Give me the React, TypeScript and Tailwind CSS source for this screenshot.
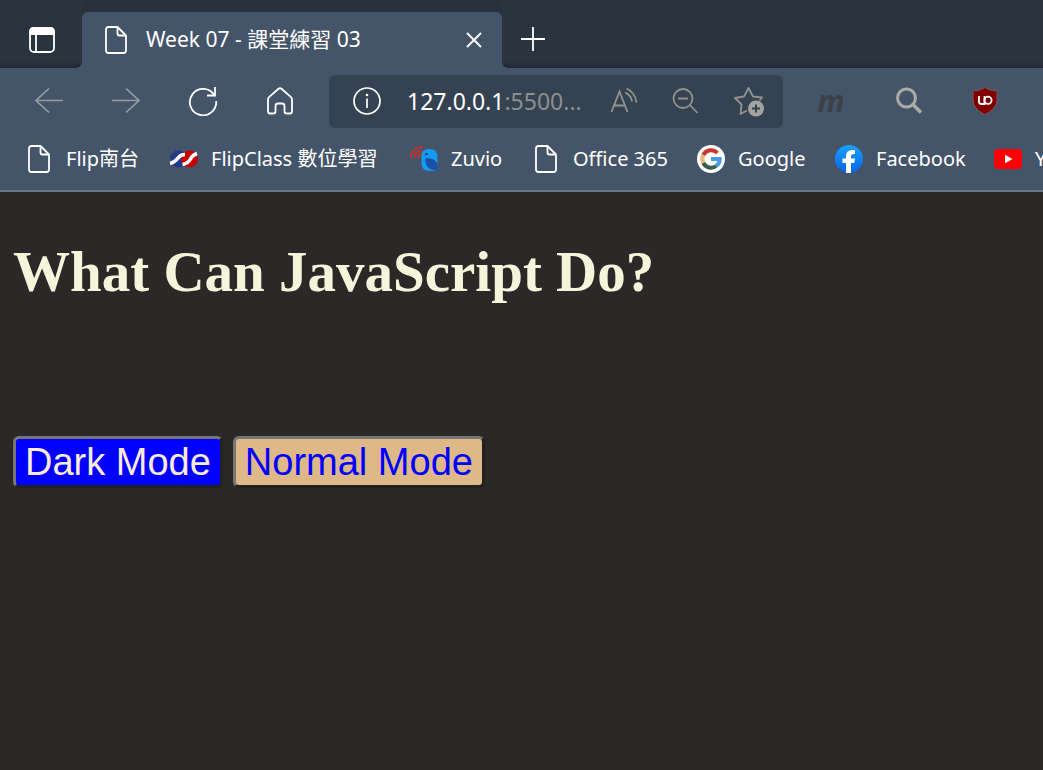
import type { ReactNode } from "react";

function PageIcon() {
  return (
    <svg className="h-7 w-[22px] shrink-0" viewBox="0 0 22 28" fill="none" stroke="#fff" strokeWidth="1.8" strokeLinejoin="round">
      <path d="M3.5 1H12.5L21 9.5V24.5Q21 27 18.5 27H3.5Q1 27 1 24.5V3.5Q1 1 3.5 1Z" />
      <path d="M12.5 1V7.5Q12.5 9.5 14.5 9.5H21" />
    </svg>
  );
}

function FlipClassIcon() {
  return (
    <svg className="h-[18px] w-7 shrink-0" viewBox="0 0 28 18">
      <circle cx="8.5" cy="9" r="8.5" fill="#263a8c" />
      <circle cx="19.5" cy="9" r="8.5" fill="#c40000" />
      <path d="M0 13.5Q5 12 8 8Q10.500 4.500 15 4.500" fill="none" stroke="#fff" strokeWidth="3.600" />
      <path d="M12.500 14.500Q18 13.500 20.500 9Q22.500 5 27 3.500" fill="none" stroke="#fff" strokeWidth="3.600" />
    </svg>
  );
}

function ZuvioIcon() {
  return (
    <svg className="h-[26px] w-7 shrink-0" viewBox="0 0 28 26">
      <g fill="none" stroke="#dc2a1c" strokeWidth="1.500">
        <path d="M1 12Q1 1.500 13 1" />
        <path d="M4.500 12Q4.500 5 12.500 4.500" />
        <path d="M8 12Q8 8 12 7.500" />
      </g>
      <path d="M11.500 10Q11.500 3 19.500 3Q27.500 3 27.500 11V25H20Q11.500 25 11.500 17Z" fill="#149cf4" />
      <path d="M15.500 12Q27.500 12 27.500 21V25Q14.500 24 15.500 12Z" fill="#1f4ea6" />
      <circle cx="16.500" cy="8" r="1.300" fill="#183d80" />
    </svg>
  );
}

function FacebookIcon() {
  return (
    <svg className="size-7 shrink-0" viewBox="0 0 28 28">
      <defs>
        <linearGradient id="fb" x1="0" y1="0" x2="0" y2="1">
          <stop offset="0" stopColor="#18a0fb" />
          <stop offset="1" stopColor="#0765e6" />
        </linearGradient>
      </defs>
      <circle cx="14" cy="14" r="14" fill="url(#fb)" />
      <path d="M11 28V18H7.500V13.500H11V11.500Q11 5 17 5Q19 5 20 5.300V9H18.200Q16 9 16 11.500V13.500H20L19.200 18H16V28Z" fill="#fff" />
    </svg>
  );
}

function YoutubeIcon() {
  return (
    <svg className="h-5 w-7 shrink-0" viewBox="0 0 28 20">
      <rect width="28" height="20" rx="4" fill="#f00" />
      <path d="M11 5.800V14.200L18.500 10Z" fill="#fff" />
    </svg>
  );
}

function GoogleIcon() {
  return (
    <svg className="size-7 shrink-0" viewBox="0 0 28 28" fill="none" strokeWidth="4">
      <circle cx="14" cy="14" r="14" fill="#fff" />
      <path d="M20.400 8A8.700 8.700 0 0 0 6.300 10" stroke="#c5392e" />
      <path d="M6.300 10A8.700 8.700 0 0 0 6.500 18.300" stroke="#e6b877" />
      <path d="M6.300 18A8.700 8.700 0 0 0 19.200 21" stroke="#33604c" />
      <path d="M14 14H22.700A8.700 8.700 0 0 1 19.200 21" stroke="#459be6" />
    </svg>
  );
}

function Bookmark({ icon, label, className }: { icon: ReactNode; label: string; className: string }) {
  return (
    <a href="#" className={`flex h-10 shrink-0 items-center whitespace-nowrap ${className}`}>
      {icon}
      {label}
    </a>
  );
}

const iconButton = "flex size-8 shrink-0 items-center justify-center";

export default function App() {
  return (
    <div className="flex min-h-screen flex-col overflow-hidden bg-[#2c2827] font-['Noto_Sans','Noto_Sans_CJK_TC',sans-serif] text-white">
      <header className="bg-[#455569]">
        <div className="flex h-[68px] bg-[#455569]">
          <div className="flex w-[82px] shrink-0 items-center rounded-br-md bg-linear-to-b from-[#2a343f] from-90% to-[#202933] pt-3 pl-[26px]">
            <button aria-label="Tab actions" className={iconButton}>
              <svg className="size-[26px]" viewBox="0 0 26 26" fill="none" stroke="#fff" strokeWidth="1.800">
                <rect x="1" y="1" width="24" height="24" rx="4" />
                <path d="M1 7V5Q1 1 5 1H21Q25 1 25 5V7Z" fill="#fff" />
                <path d="M7 7V25" />
              </svg>
            </button>
          </div>
          <div className="w-[420px] shrink-0 bg-[#28323d] pt-3">
            <div className="flex h-14 items-center rounded-t-md bg-[#455569] pl-[23px]">
              <PageIcon />
              <span className="ml-[19px] flex-1 text-[21px] whitespace-nowrap">Week 07 - 課堂練習 03</span>
              <button aria-label="Close tab" className="mr-3 flex size-8 items-center justify-center">
                <svg className="size-4" viewBox="0 0 16 16" stroke="#fff" strokeWidth="1.900">
                  <path d="M1 1L15 15M15 1L1 15" />
                </svg>
              </button>
            </div>
          </div>
          <div className="flex flex-1 items-center rounded-bl-md bg-linear-to-b from-[#2a343f] from-90% to-[#202933] pt-[10px] pl-[15px]">
            <button aria-label="New tab" className={iconButton}>
              <svg className="size-6" viewBox="0 0 24 24" stroke="#fff" strokeWidth="1.800">
                <path d="M12 0V24M0 12H24" />
              </svg>
            </button>
          </div>
        </div>

        <nav aria-label="Navigation" className="flex h-[66px] items-center pl-[33px]">
          <button aria-label="Back" className={iconButton}>
            <svg className="size-7" viewBox="0 0 28 28" fill="none" stroke="#979b9f" strokeWidth="1.700">
              <path d="M28 13.500H1M14 1.500L1 13.500L14 25.500" />
            </svg>
          </button>
          <button aria-label="Forward" className={`${iconButton} ml-[45px]`}>
            <svg className="size-7" viewBox="0 0 28 28" fill="none" stroke="#979b9f" strokeWidth="1.700">
              <path d="M0 13.500H27M14 1.500L27 13.500L14 25.500" />
            </svg>
          </button>
          <button aria-label="Refresh" className={`${iconButton} ml-[45px]`}>
            <svg className="size-[30px]" viewBox="-1 -1 30 30" fill="none" stroke="#fff" strokeWidth="1.800">
              <path d="M25.500 8.500A13.200 13.200 0 1 0 27.200 14M26 0V8.500H18" />
            </svg>
          </button>
          <button aria-label="Home" className={`${iconButton} ml-[45px]`}>
            <svg className="h-7 w-[26px]" viewBox="0 0 26 28" fill="none" stroke="#fff" strokeWidth="1.800" strokeLinejoin="round">
              <path d="M1 12.500Q1 11 2.300 9.900L11.500 1.800Q13 0.600 14.500 1.800L23.700 9.900Q25 11 25 12.500V24Q25 26.500 23 26.500H20Q17.500 26.500 17.500 24.500V19Q17.500 16.500 15 16.500H11Q8.500 16.500 8.500 19V24.500Q8.500 26.500 6 26.500H3Q1 26.500 1 24Z" />
            </svg>
          </button>
          <div className="ml-[33px] flex h-[53px] w-[454px] shrink-0 items-center rounded-md bg-[#354252] pr-[18px] pl-[22px]">
            <button aria-label="Site information" className={iconButton}>
              <svg className="size-7" viewBox="0 0 28 28" fill="none" stroke="#fff" strokeWidth="1.700">
                <circle cx="14" cy="14" r="13" />
                <path d="M14 11.500V21" />
                <circle cx="14" cy="8" r="1.300" fill="#fff" stroke="none" />
              </svg>
            </button>
            <span className="ml-6 flex-1 text-[23px] whitespace-nowrap">
              127.0.0.1<span className="text-[#8d8f8e]">:5500...</span>
            </span>
            <button aria-label="Read aloud" className={iconButton}>
              <svg className="size-7" viewBox="0 0 28 28" fill="none" stroke="#92928e" strokeWidth="1.800">
                <path d="M1.500 25L9.500 4.500L17.500 25M4.500 18.500H14.500M16.500 1.500Q25 5 26.500 15.500M15 5.500Q21 8 22 14.500" />
              </svg>
            </button>
            <button aria-label="Zoom out" className={`${iconButton} ml-[29px]`}>
              <svg className="size-7" viewBox="0 0 28 28" fill="none" stroke="#92928e" strokeWidth="1.800">
                <circle cx="12" cy="11.500" r="9.500" />
                <path d="M7 11.500H17M19 18L26.500 26" />
              </svg>
            </button>
            <button aria-label="Add to favorites" className={`${iconButton} ml-8`}>
              <svg className="size-8" viewBox="0 0 32 32" fill="none" stroke="#92928e" strokeWidth="1.800" strokeLinejoin="round">
                <path d="M14 25.500L7.500 29L8.500 19.500L2 13L11 11.500L15.500 3L20 11.500L29 12.500L26.500 15.500" />
                <circle cx="23" cy="23.500" r="8" fill="#a3a4a0" stroke="none" />
                <path d="M23 19.500V27.500M19 23.500H27" stroke="#354252" strokeWidth="2" />
              </svg>
            </button>
          </div>
          <button aria-label="m extension" className={`${iconButton} ml-8 text-[30px] leading-none font-bold text-[#3c4047] italic`}>
            m
          </button>
          <button aria-label="Search" className={`${iconButton} ml-[46px]`}>
            <svg className="size-7" viewBox="0 0 28 28" fill="none" stroke="#aaaaa6">
              <circle cx="11.500" cy="11" r="9" strokeWidth="3" />
              <path d="M18 17.500L26 25.500" strokeWidth="3.600" />
            </svg>
          </button>
          <button aria-label="uBlock Origin" className={`${iconButton} ml-11`}>
            <svg className="h-7 w-[26px]" viewBox="0 0 26 28">
              <path d="M13 0.500Q18 4 25 4V13Q25 22 13 27.500Q1 22 1 13V4Q8 4 13 0.500Z" fill="#800000" stroke="#7d5560" />
              <path d="M7 9V14.500Q7 17 9.500 17H12.500V9" fill="none" stroke="#fff" strokeWidth="1.800" />
              <circle cx="16" cy="13.200" r="3.600" fill="none" stroke="#fff" strokeWidth="1.800" />
            </svg>
          </button>
        </nav>

        <nav aria-label="Favorites" className="flex h-[58px] items-start overflow-hidden border-b-2 border-[#6b7a8b] pt-[5px] pl-7 text-[20px]">
          <Bookmark icon={<PageIcon />} label="Flip南台" className="w-[142px] gap-4" />
          <Bookmark icon={<FlipClassIcon />} label="FlipClass 數位學習" className="w-[240px] gap-[13px]" />
          <Bookmark icon={<ZuvioIcon />} label="Zuvio" className="w-[125px] gap-[13px]" />
          <Bookmark icon={<PageIcon />} label="Office 365" className="w-[162px] gap-4" />
          <Bookmark icon={<GoogleIcon />} label="Google" className="w-[138px] gap-[13px]" />
          <Bookmark icon={<FacebookIcon />} label="Facebook" className="w-[159px] gap-[13px]" />
          <Bookmark icon={<YoutubeIcon />} label="YouTube" className="gap-[13px]" />
        </nav>
      </header>

      <main className="px-[13px] pt-12">
        <h1 className="font-['Liberation_Serif',serif] text-[57px] leading-16 font-bold text-[#f5f5dc]">What Can JavaScript Do?</h1>
        <div className="mt-[132px] flex gap-[10px] font-['Liberation_Sans',sans-serif] text-[38px] leading-[46px]">
          <button className="rounded-md border-3 border-t-[#767676] border-r-[#212121] border-b-[#212121] border-l-[#767676] bg-[#0000ff] px-[9px] text-[#faebd7]">
            Dark Mode
          </button>
          <button className="rounded-md border-3 border-t-[#767676] border-r-[#212121] border-b-[#212121] border-l-[#767676] bg-[#deb887] px-[9px] text-[#0000ff]">
            Normal Mode
          </button>
        </div>
      </main>
    </div>
  );
}
